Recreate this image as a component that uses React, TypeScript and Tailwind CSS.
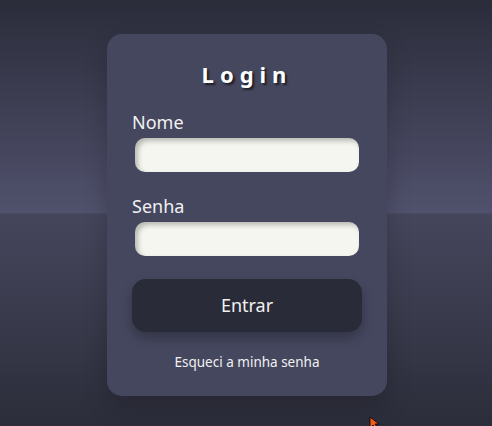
import React from "react";

const font = { fontFamily: '"Noto Sans", "Open Sans", sans-serif' };

function Field({ label, type }: { label: string; type: string }) {
    return (
        <div className="flex flex-col">
            <label className="text-[18px] leading-[22px] text-[#f1f1f1]">{label}</label>
            <input
                type={type}
                className="mx-[3px] mt-[5px] h-[34px] w-[224px] rounded-[10px] bg-[#f5f6ef] px-3 outline-none shadow-[inset_3px_3px_5px_rgba(0,0,0,0.25)]"
            />
        </div>
    );
}

export default function App() {
    return (
        <div
            className="relative h-[426px] w-full overflow-hidden bg-[linear-gradient(to_bottom,#2b2c3a_0px,#50516c_213px,#45465c_214px,#2c2d3a_426px)]"
            style={font}
        >
            <div className="flex justify-center pl-[2px] pt-[34px]">
                {/* Card */}
                <div className="flex h-[362px] w-[280px] flex-col rounded-[15px] bg-[#44475e] px-[25px] pt-[20px] shadow-[0_10px_25px_rgba(0,0,0,0.2)]">
                    <h1 className="text-center text-[22px] font-bold leading-[40px] tracking-[6px] text-white [text-shadow:2px_2px_2px_rgba(0,0,0,0.6)]">
                        Login
                    </h1>

                    <div className="mt-[17px] flex flex-col gap-[23px]">
                        <Field label="Nome" type="text" />
                        <Field label="Senha" type="password" />
                    </div>

                    <button className="mt-[23px] h-[53px] w-[230px] rounded-[14px] bg-[#2a2b38] text-[18px] text-[#f1f1f1] shadow-[0_6px_12px_rgba(0,0,0,0.25)]">
                        Entrar
                    </button>

                    <a className="mt-[20px] text-center text-[13.5px] text-[#f1f1f1]">Esqueci a minha senha</a>
                </div>
            </div>

            {/* cursor */}
            <svg className="absolute left-[369px] top-[417px]" width="12" height="12" viewBox="0 0 12 12">
                <path d="M1 0 L1 11 L4 8 L7 12 L9 11 L6 7 L10 7 Z" fill="#f05a1a" stroke="#000" strokeWidth="0.8" />
            </svg>
        </div>
    );
}
